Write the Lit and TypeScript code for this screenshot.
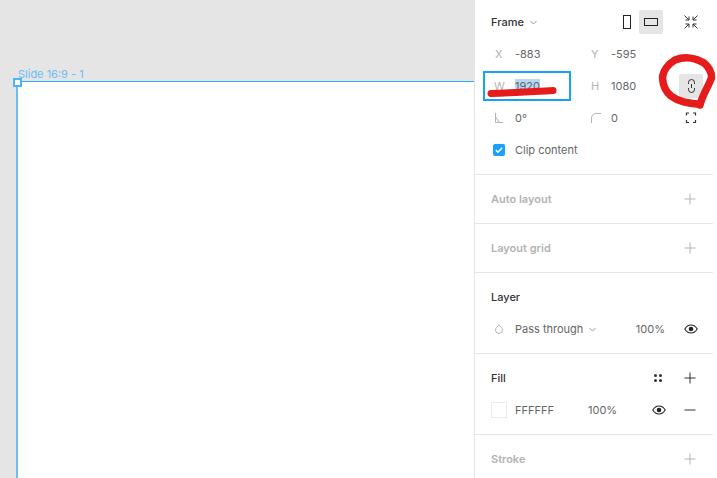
import { LitElement, html, css, svg } from "lit";
import { customElement } from "lit/decorators.js";

const chevron = svg`<svg class="chev" width="7" height="5" viewBox="0 0 7 5"><path d="M.5 1 3.500 4 6.500 1" fill="none" stroke="#999" stroke-width="1"/></svg>`;
const plus = (cls: string) => svg`<svg class="ic ${cls}" width="12" height="12" viewBox="0 0 12 12"><path d="M6 .5v11M.5 6h11" fill="none" stroke="currentColor" stroke-width="1"/></svg>`;
const eye = (cls: string) => svg`<svg class="ic ${cls}" width="14" height="10" viewBox="0 0 14 10"><path d="M.8 5C2.300 2.400 4.500 1 7 1s4.700 1.400 6.200 4C11.700 7.600 9.500 9 7 9S2.300 7.600.8 5Z" fill="none" stroke="#222" stroke-width="1.100"/><circle cx="7" cy="5" r="2.300" fill="#222"/></svg>`;

@customElement("app-root")
export class AppRoot extends LitElement {
  static styles = css`
    :host { display: block; width: 717px; height: 478px; position: relative; overflow: hidden; background: #fff;
      font-family: Inter, "Liberation Sans", sans-serif; font-size: 11px; color: #333; }
    .app { display: flex; width: 100%; height: 100%; }
    .canvas { flex: 1; background: #e5e5e5; position: relative; overflow: hidden; }
    .frame { position: absolute; left: 16px; top: 81px; right: 0; bottom: 0; background: #fff;
      border-left: 2px solid #6cbdf6; border-top: 1px solid #30a8fb; }
    .frame-label { position: absolute; left: 18px; top: 67px; font-size: 11px; line-height: 14px; color: #6cbdf6; }
    .handle { position: absolute; left: 13px; top: 78px; width: 5px; height: 5px; background: #fff; border: 2px solid #4db2f8; }
    .panel { width: 238px; margin-right: 4px; flex: none; background: #fff; border-left: 1px solid #e5e5e5; display: flex; flex-direction: column; }
    .sec { border-bottom: 1px solid #e5e5e5; padding: 0 0 0 16px; flex: none; }
    .sec:last-child { border-bottom: 0; }
    .props { height: 168px; padding-top: 6px; }
    .row { height: 32px; display: flex; align-items: center; position: relative; color: #666; }
    .title { height: 48px; display: flex; align-items: center; font-weight: 600; }
    .title.off { color: #b3b3b3; }
    .layer, .fill { height: 80px; }
    .head { height: 32px; margin-top: 8px; display: flex; align-items: center; font-weight: 500; color: #333; }
    .props .head { margin-top: 0; }
    .grow { flex: 1; }
    .ic { flex: none; display: block; }
    .chev { margin-left: 6px; flex: none; }
    .cell1 { display: flex; align-items: center; width: 100px; height: 100%; flex: none; }
    .cell1 .lab { width: 24px; flex: none; color: #b3b3b3; padding-left: 4px; box-sizing: border-box; }
    .cell2 { display: flex; align-items: center; width: 88px; height: 100%; flex: none; }
    .cell2 .lab { width: 20px; flex: none; color: #b3b3b3; }
    .wbox { display: flex; align-items: center; width: 88px; height: 30px; flex: none; box-sizing: border-box;
      border: 2px solid #18a0fb; margin-left: -8px; padding-left: 9px; }
    .wbox .lab { width: 21px; flex: none; color: #b3b3b3; }
    .sel { background: #b6d8f5; }
    .after-w { margin-left: 20px; }
    .btn { position: absolute; left: 188px; top: 4px; width: 24px; height: 24px; display: flex; align-items: center; justify-content: center; background: #e5e5e5; border-radius: 2px; }
    .corner { position: absolute; left: 194px; top: 10px; }
    .orient { display: flex; align-items: center; }
    .obtn { width: 24px; height: 24px; display: flex; align-items: center; justify-content: center; border-radius: 2px; }
    .obtn.on { background: #e5e5e5; }
    .shrink { margin-left: 20px; margin-right: 14px; }
    .check { width: 12px; height: 12px; background: #18a0fb; border-radius: 2px; display: flex; align-items: center; justify-content: center; margin: 0 10px 0 2px; flex: none; }
    .rp { margin-right: 17px; color: #b3b3b3; }
    .dark { color: #333; }
    .dots { margin-right: 21px; }
    .drop { margin: 0 12px 0 4px; flex: none; }
    .swatch { width: 16px; height: 16px; box-sizing: border-box; border: 1px solid #ececec; background: #fff; margin-right: 8px; flex: none; }
    .hex { width: 54px; flex: none; }
    .pct2 { width: 32px; flex: none; margin-left: 19px; }
    .eye-layer { margin: 0 15px 0 19px; }
    .minus { margin: 0 17px 0 18px; }
    .ink { position: absolute; inset: 0; pointer-events: none; }
  `;

  render() {
    return html`
      <div class="app">
        <div class="canvas">
          <div class="frame-label">Slide 16:9 - 1</div>
          <div class="frame"></div>
          <div class="handle"></div>
        </div>
        <div class="panel">
          <div class="sec props">
            <div class="head">Frame ${chevron}<span class="grow"></span>
              <div class="orient">
                <div class="obtn"><svg width="8" height="14" viewBox="0 0 8 14"><rect x=".5" y=".5" width="7" height="13" fill="none" stroke="#222"/></svg></div>
                <div class="obtn on"><svg width="14" height="8" viewBox="0 0 14 8"><rect x=".5" y=".5" width="13" height="7" fill="none" stroke="#222"/></svg></div>
              </div>
              <svg class="ic shrink" width="16" height="16" viewBox="0 0 16 16"><path d="M1.500 1.500 6 6M6 2.500V6H2.500M14.500 1.500 10 6M10 2.500V6h3.500M1.500 14.500 6 10M6 13.500V10H2.500M14.500 14.500 10 10M10 13.500V10h3.500" fill="none" stroke="#333" stroke-width="1"/></svg>
            </div>
            <div class="row">
              <div class="cell1"><span class="lab">X</span><span>-883</span></div>
              <div class="cell2"><span class="lab">Y</span><span>-595</span></div>
            </div>
            <div class="row">
              <div class="wbox"><span class="lab">W</span><span class="sel">1920</span></div>
              <div class="cell2 after-w"><span class="lab">H</span><span>1080</span></div>
              <div class="btn"><svg width="7" height="14" viewBox="0 0 7 14"><path d="M.5 5V3.500a3 3 0 0 1 6 0V5M.5 9v1.500a3 3 0 0 0 6 0V9M3.500 5v4" fill="none" stroke="#333" stroke-width="1"/></svg></div>
            </div>
            <div class="row">
              <div class="cell1"><span class="lab"><svg class="ic" width="9" height="10" viewBox="0 0 9 10"><path d="M.5 0v9.500H8M.5 4 4.500 9.500" fill="none" stroke="#b3b3b3"/></svg></span><span>0°</span></div>
              <div class="cell2"><span class="lab"><svg class="ic" width="10" height="10" viewBox="0 0 10 10"><path d="M.5 10V5A4.500 4.500 0 0 1 5 .5h5" fill="none" stroke="#b3b3b3"/></svg></span><span>0</span></div>
              <svg class="ic corner" width="12" height="12" viewBox="0 0 12 12"><path d="M1.500 3.500v-2.500H4M8 1h2.500v2.500M10.500 8v2.500H8M4 10.500H1.500V8" fill="none" stroke="#333" stroke-width="1.200"/></svg>
            </div>
            <div class="row">
              <div class="check"><svg width="8" height="6" viewBox="0 0 8 6"><path d="M.8 3 3 5.200 7.200 .8" fill="none" stroke="#fff" stroke-width="1.500"/></svg></div>
              <span>Clip content</span>
            </div>
          </div>
          <div class="sec title off">Auto layout<span class="grow"></span>${plus("rp")}</div>
          <div class="sec title off">Layout grid<span class="grow"></span>${plus("rp")}</div>
          <div class="sec layer">
            <div class="head">Layer</div>
            <div class="row">
              <svg class="ic drop" width="8" height="10" viewBox="0 0 8 10"><path d="M4 .8C5.500 2.500 7.500 4 7.500 6a3.500 3.500 0 0 1-7 0C.5 4 2.500 2.500 4 .8Z" fill="none" stroke="#b3b3b3"/></svg>
              <span>Pass through</span>${chevron}
              <span class="grow"></span><span>100%</span>
              ${eye("eye-layer")}
            </div>
          </div>
          <div class="sec fill">
            <div class="head">Fill<span class="grow"></span>
              <svg class="ic dots" width="10" height="10" viewBox="0 0 10 10"><g fill="#333"><circle cx="2.500" cy="2.500" r="1.500"/><circle cx="7.500" cy="2.500" r="1.500"/><circle cx="2.500" cy="7.500" r="1.500"/><circle cx="7.500" cy="7.500" r="1.500"/></g></svg>
              ${plus("rp dark")}
            </div>
            <div class="row">
              <div class="swatch"></div><span class="hex">FFFFFF</span><span class="pct2">100%</span>
              <span class="grow"></span>${eye("")}
              <svg class="ic minus" width="12" height="2" viewBox="0 0 12 2"><path d="M.5 1h11" stroke="#333"/></svg>
            </div>
          </div>
          <div class="sec title off">Stroke<span class="grow"></span>${plus("rp")}</div>
        </div>
      </div>
      <svg class="ink" width="717" height="478" viewBox="0 0 717 478">
        <path d="M491 93.500 C 510 93 535 91.500 553 90.500" fill="none" stroke="#e61c1c" stroke-width="7" stroke-linecap="round"/>
        <path d="M700 105 C 702 96 708 87 711.500 78 C 712 72 708 66 704 63 C 696 58 685 56 675 60 C 668 64 663 71 662.500 78 C 663 86 666 92 671 96 C 679 102 688 103 697 104" fill="none" stroke="#e61c1c" stroke-width="7.500" stroke-linecap="round" stroke-linejoin="round"/>
      </svg>
    `;
  }
}
